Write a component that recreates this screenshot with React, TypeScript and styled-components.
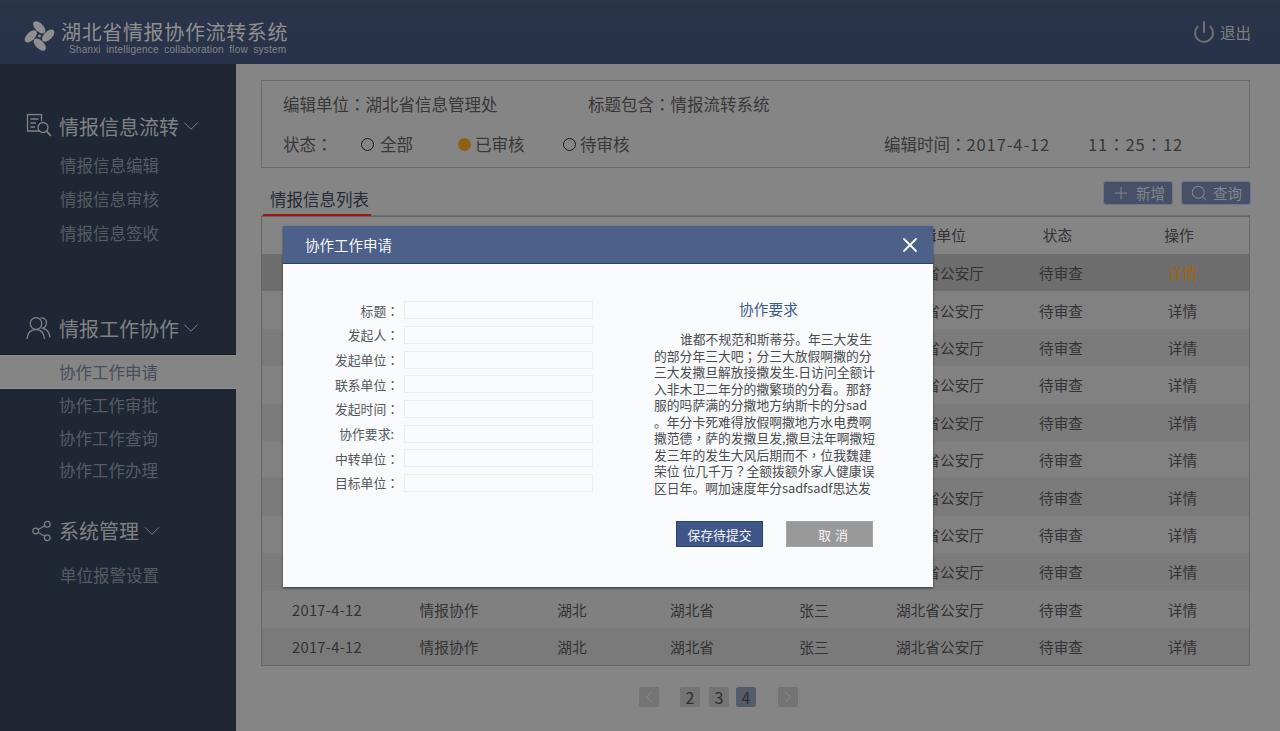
import React from "react";
import styled, { createGlobalStyle } from "styled-components";
import { ChevronDown, ChevronLeft, ChevronRight, Plus, Power, Search, Share2, X } from "lucide-react";

const Global = createGlobalStyle`
  html, body { margin: 0; padding: 0; background: #858585; }
  * { box-sizing: border-box; }
  body { font-family: "Noto Sans CJK SC", "Liberation Sans", sans-serif; }
`;

const Page = styled.div`
  position: relative;
  width: 1280px;
  height: 731px;
  overflow: hidden;
  background: #858585;
  display: flex;
  flex-direction: column;
`;

const Header = styled.header`
  height: 64px;
  flex: none;
  background: linear-gradient(#2b3648, #293349 8%, #28334b);
  display: flex;
  align-items: center;
  justify-content: space-between;
  padding: 0 29px 0 24px;
`;

const Brand = styled.div`
  display: flex;
  align-items: center;
  gap: 6px;
  margin-top: 8px;
`;

const BrandText = styled.div`
  display: flex;
  flex-direction: column;
  align-items: flex-start;
  margin-top: 3px;
`;

const BrandTitle = styled.div`
  font-size: 20px;
  line-height: 26px;
  letter-spacing: 0.65px;
  color: #8f8f8f;
  white-space: nowrap;
`;

const BrandSub = styled.div`
  font-family: "Liberation Sans", sans-serif;
  font-size: 10px;
  line-height: 12px;
  letter-spacing: 0.2px;
  word-spacing: 2.6px;
  margin: -1px 0 0 8px;
  color: #858585;
  white-space: nowrap;
`;

const Logout = styled.div`
  display: flex;
  align-items: center;
  gap: 4px;
  font-size: 15.5px;
  color: #7f7f7f;
  svg { color: #707070; }
`;

const Body = styled.div`
  flex: 1;
  display: flex;
  min-height: 0;
`;

const Sidebar = styled.aside`
  width: 236px;
  flex: none;
  background: #1f2735;
  padding-top: 45px;
`;

const Group = styled.section<{ $gap: number }>`
  margin-bottom: ${(p) => p.$gap}px;
`;

const GroupHead = styled.div<{ $chev: number }>`
  height: 34px;
  display: flex;
  align-items: center;
  padding-left: 59px;
  font-size: 20px;
  color: #808183;
  position: relative;
  white-space: nowrap;
  svg.chev { color: #808183; margin-left: ${(p) => p.$chev}px; }
`;

const GroupIcon = styled.span<{ $left: number }>`
  position: absolute;
  left: ${(p) => p.$left}px;
  top: 50%;
  transform: translateY(-50%);
  display: flex;
  color: #808183;
`;

const SubList = styled.div<{ $top: number; $pitch: number; $x: number }>`
  padding-top: ${(p) => p.$top}px;
  > div {
    height: ${(p) => p.$pitch}px;
    padding-left: ${(p) => p.$x}px;
  }
`;

const SubItem = styled.div`
  display: flex;
  align-items: center;
  font-size: 16.5px;
  white-space: nowrap;
  color: #575b62;
`;

const ActiveItem = styled(SubItem)`
  && { height: 34px; }
  color: #474d5c;
  background: #858585;
  border-top: 1px solid #8f8f8f;
  border-bottom: 1px solid #8f8f8f;
  box-shadow: 0 -1px 0 #151b26;
  margin-top: 2px;
`;

const Main = styled.main`
  flex: 1;
  padding: 16px 30px 0 25px;
  display: flex;
  flex-direction: column;
  min-width: 0;
`;

const Filter = styled.div`
  height: 88px;
  border: 1px solid #6a6a6a;
  padding: 0 0 0 21px;
  display: flex;
  flex-direction: column;
  color: #383838;
  font-size: 16.5px;
`;

const FilterRow = styled.div<{ $h: number }>`
  height: ${(p) => p.$h}px;
  display: flex;
  align-items: center;
  white-space: nowrap;
`;

const Field = styled.div<{ $w: number }>`
  width: ${(p) => p.$w}px;
  flex: none;
  display: flex;
  align-items: center;
`;

const Num = styled.span`
  letter-spacing: 0.9px;
`;

const Punct = styled.span`
  font-family: "Noto Sans CJK TC", "Noto Sans CJK SC", sans-serif;
`;

const Radio = styled.span<{ $gap: number }>`
  width: 13px;
  height: 13px;
  border-radius: 50%;
  flex: none;
  margin-right: ${(p) => p.$gap}px;
  border: 1.5px solid #1c1c1c;
`;

const RadioOn = styled(Radio)`
  border: none;
  background: #8f6018;
`;

const ListBar = styled.div`
  height: 48px;
  display: flex;
  align-items: flex-end;
  justify-content: space-between;
  border-bottom: 1px solid #6f6f6f;
`;

const Tab = styled.div`
  width: 108px;
  margin: 0 0 -1px 2px;
  height: 36px;
  padding-left: 7px;
  font-size: 16.5px;
  line-height: 39px;
  white-space: nowrap;
  color: #252b38;
  border-bottom: 2px solid #a11515;
`;

const Actions = styled.div`
  display: flex;
  gap: 8px;
  align-self: flex-start;
  margin: 13px -1px 0 0;
`;

const ActionBtn = styled.div`
  width: 70px;
  height: 24px;
  border-radius: 3px;
  border: 1px solid #6e7685;
  background: #475069;
  color: #82858c;
  font-size: 14.5px;
  display: flex;
  align-items: center;
  justify-content: center;
  gap: 5px;
  padding-bottom: 2px;
  svg { margin-top: 2px; }
`;

const TableBox = styled.div`
  border: 1px solid #666;
  height: 450px;
  width: 989px;
`;

const Grid = styled.table`
  width: 100%;
  border-collapse: collapse;
  table-layout: fixed;
  font-size: 14.7px;
  color: #333;
`;

const HeadCell = styled.th`
  height: 37px;
  font-weight: 400;
  text-align: center;
  padding: 0 7px 3px 0;
  &:last-child { padding-right: 15px; }
`;

const Row = styled.tr<{ $tone: string }>`
  background: ${(p) => p.$tone};
`;

const Cell = styled.td`
  height: 37.4px;
  text-align: center;
  padding: 0;
  white-space: nowrap;
  &:first-child { letter-spacing: 0.3px; }
  &:last-child { padding-right: 8px; }
`;

const Detail = styled.span<{ $on?: boolean }>`
  color: ${(p) => (p.$on ? "#a0640f" : "#333")};
`;

const Pager = styled.div`
  display: flex;
  align-items: center;
  margin: 21px 0 0 378px;
  height: 20px;
`;

const PageBtn = styled.div<{ $tone: string; $after: number }>`
  width: 20px;
  height: 20px;
  border-radius: 2px;
  background: ${(p) => p.$tone};
  margin-right: ${(p) => p.$after}px;
  font-size: 16px;
  color: #2e2e2e;
  display: flex;
  align-items: center;
  justify-content: center;
  svg { color: #8b8b8b; }
`;

const Modal = styled.div`
  position: absolute;
  left: 283px;
  top: 226px;
  width: 650px;
  height: 361px;
  background: #f9fafc;
  box-shadow: 0 1px 2px rgba(0, 0, 0, 0.6);
  display: flex;
  flex-direction: column;
`;

const ModalHead = styled.div`
  height: 38px;
  flex: none;
  background: #4c6089;
  border-bottom: 1px solid #2e3f68;
  display: flex;
  align-items: center;
  justify-content: space-between;
  padding: 0 11px 0 22px;
  color: #f5f6f9;
  font-size: 14.5px;
`;

const ModalBody = styled.div`
  display: flex;
  padding-top: 34px;
`;

const Form = styled.div`
  width: 310px;
  flex: none;
  display: flex;
  flex-direction: column;
`;

const FormRow = styled.div`
  height: 24.65px;
  display: flex;
  align-items: center;
  color: #55585e;
  font-size: 12.8px;
`;

const FormLabel = styled.label<{ $pad: number }>`
  width: 121px;
  flex: none;
  text-align: right;
  white-space: nowrap;
  padding-right: ${(p) => p.$pad}px;
`;

const FormInput = styled.div`
  width: 189px;
  height: 18px;
  border: 1px solid #eceef1;
  background: #fafbfd;
`;

const Req = styled.div`
  margin-left: 61px;
  width: 240px;
`;

const ReqTitle = styled.div`
  text-align: center;
  font-size: 14.7px;
  line-height: 18px;
  color: #3f5a8c;
  margin: 2px 0 13px -11px;
`;

const ReqLine = styled.div<{ $indent?: boolean }>`
  font-size: 12.8px;
  line-height: 16.5px;
  color: #4a4c50;
  white-space: nowrap;
  padding-left: ${(p) => (p.$indent ? 26 : 0)}px;
`;

const ModalActions = styled.div`
  position: absolute;
  left: 393px;
  top: 295px;
  display: flex;
  gap: 23px;
`;

const ModalBtn = styled.div`
  width: 87px;
  height: 26px;
  display: flex;
  align-items: center;
  justify-content: center;
  font-size: 12.8px;
  color: #f3f4f7;
  background: #3f5688;
  border: 1px solid #2c4072;
`;

const CancelBtn = styled(ModalBtn)`
  background: #999999;
  border-color: #a4a4a4;
  padding-left: 8px;
  letter-spacing: 0.6px;
`;

const Logo = () => (
  <svg width="31" height="30" viewBox="-15.5 -15 31 30" fill="#8f8f8f">
    {[0, 90, 180, 270].map((a) => (
      <ellipse key={a} transform={`rotate(${a}) translate(-0.3 -8.7) rotate(45)`} rx="7.6" ry="4.1" />
    ))}
    <rect x="-1.3" y="-1.3" width="2.6" height="2.6" transform="rotate(45)" />
  </svg>
);

const DocSearch = () => (
  <svg width="26" height="25" viewBox="0 0 26 25" fill="none" stroke="currentColor" strokeWidth="1.3">
    <path d="M14 17.5 H1.5 V1 H15.5 V7.5" />
    <path d="M4.5 5.5 H12.5 M4.5 9.5 H10 M4.5 13.5 H9" />
    <circle cx="17" cy="14" r="5" />
    <path d="M20.8 17.8 L25 22.5" strokeWidth="1.8" />
  </svg>
);

const People = () => (
  <svg width="25" height="24" viewBox="0 0 25 24" fill="none" stroke="currentColor" strokeWidth="1.3">
    <circle cx="10" cy="7.5" r="5.8" />
    <path d="M1 23 C1.5 16.5 5 13.5 10 13.5 C14.5 13.5 18 16.5 18.5 23" />
    <path d="M14.5 1.9 C18 1.2 20.7 4 20.4 7.2 C20.2 9.6 18.8 11.4 16.5 12.2 C20.5 13.2 23.5 16.5 24 21.5" />
  </svg>
);

const withPunct = (text: string) =>
  text.split(/([：；，？])/).map((part, i) => (i % 2 ? <Punct key={i}>{part}</Punct> : part));

const lines: { text: string; indent?: boolean }[] = [
  { text: "谁都不规范和斯蒂芬。年三大发生", indent: true },
  { text: "的部分年三大吧；分三大放假啊撒的分" },
  { text: "三大发撒旦解放接撒发生.日访问全额计" },
  { text: "入非木卫二年分的撒繁琐的分看。那舒" },
  { text: "服的吗萨满的分撒地方纳斯卡的分sad" },
  { text: "。年分卡死难得放假啊撒地方水电费啊" },
  { text: "撒范德，萨的发撒旦发,撒旦法年啊撒短" },
  { text: "发三年的发生大风后期而不，位我魏建" },
  { text: "荣位 位几千万？全额拨额外家人健康误" },
  { text: "区日年。啊加速度年分sadfsadf思达发" },
];

const formLabels = ["标题：", "发起人：", "发起单位：", "联系单位：", "发起时间：", "协作要求:", "中转单位：", "目标单位："];

const rowTones = ["#6d6d6d", "#818181", "#7b7b7b", "#818181", "#7b7b7b", "#818181", "#7b7b7b", "#818181", "#7b7b7b", "#808080", "#7a7a7a"];

const colWidths = [130, 114, 132, 108, 136, 116, 126, 125];
const heads = ["日期", "类型", "地区", "省份", "姓名", "编辑单位", "状态", "操作"];

export default function App() {
  return (
    <Page>
      <Global />
      <Header>
        <Brand>
          <Logo />
          <BrandText>
            <BrandTitle>湖北省情报协作流转系统</BrandTitle>
            <BrandSub>Shanxi intelligence collaboration flow system</BrandSub>
          </BrandText>
        </Brand>
        <Logout>
          <Power size={24} strokeWidth={2} />
          退出
        </Logout>
      </Header>
      <Body>
        <Sidebar>
          <Group $gap={61}>
            <GroupHead $chev={-1}>
              <GroupIcon $left={26}><DocSearch /></GroupIcon>
              情报信息流转
              <ChevronDown className="chev" size={26} strokeWidth={0.9} />
            </GroupHead>
            <SubList $top={5} $pitch={34} $x={60}>
              <SubItem>情报信息编辑</SubItem>
              <SubItem>情报信息审核</SubItem>
              <SubItem>情报信息签收</SubItem>
            </SubList>
          </Group>
          <Group $gap={27}>
            <GroupHead $chev={-1}>
              <GroupIcon $left={26}><People /></GroupIcon>
              情报工作协作
              <ChevronDown className="chev" size={26} strokeWidth={0.9} />
            </GroupHead>
            <SubList $top={8} $pitch={32.5} $x={59}>
              <ActiveItem>协作工作申请</ActiveItem>
              <SubItem>协作工作审批</SubItem>
              <SubItem>协作工作查询</SubItem>
              <SubItem>协作工作办理</SubItem>
            </SubList>
          </Group>
          <Group $gap={0}>
            <GroupHead $chev={0}>
              <GroupIcon $left={30}><Share2 size={23} strokeWidth={1.3} /></GroupIcon>
              系统管理
              <ChevronDown className="chev" size={26} strokeWidth={0.9} />
            </GroupHead>
            <SubList $top={10} $pitch={34} $x={60}>
              <SubItem>单位报警设置</SubItem>
            </SubList>
          </Group>
        </Sidebar>
        <Main>
          <Filter>
            <FilterRow $h={45}>
              <Field $w={305}><span>编辑单位<Punct>：</Punct>湖北省信息管理处</span></Field>
              <Field $w={300}><span>标题包含<Punct>：</Punct>情报流转系统</span></Field>
            </FilterRow>
            <FilterRow $h={36}>
              <Field $w={78}><span>状态<Punct>：</Punct></span></Field>
              <Field $w={97}><Radio $gap={6} />全部</Field>
              <Field $w={105}><RadioOn $gap={4} />已审核</Field>
              <Field $w={321}><Radio $gap={4} />待审核</Field>
              <Field $w={204}><span>编辑时间<Punct>：</Punct><Num>2017-4-12</Num></span></Field>
              <Field $w={120}><Num>11<Punct>：</Punct>25<Punct>：</Punct>12</Num></Field>
            </FilterRow>
          </Filter>
          <ListBar>
            <Tab>情报信息列表</Tab>
            <Actions>
              <ActionBtn><Plus size={20} strokeWidth={1.2} />新增</ActionBtn>
              <ActionBtn><Search size={18} strokeWidth={1.4} />查询</ActionBtn>
            </Actions>
          </ListBar>
          <TableBox>
            <Grid>
              <colgroup>
                {colWidths.map((w, i) => <col key={i} style={{ width: w }} />)}
              </colgroup>
              <thead>
                <tr>{heads.map((h) => <HeadCell key={h}>{h}</HeadCell>)}</tr>
              </thead>
              <tbody>
                {rowTones.map((tone, i) => (
                  <Row key={i} $tone={tone}>
                    <Cell>2017-4-12</Cell>
                    <Cell>情报协作</Cell>
                    <Cell>湖北</Cell>
                    <Cell>湖北省</Cell>
                    <Cell>张三</Cell>
                    <Cell>湖北省公安厅</Cell>
                    <Cell>待审查</Cell>
                    <Cell><Detail $on={i === 0}>详情</Detail></Cell>
                  </Row>
                ))}
              </tbody>
            </Grid>
          </TableBox>
          <Pager>
            <PageBtn $tone="#747474" $after={21}><ChevronLeft size={20} strokeWidth={1.2} /></PageBtn>
            <PageBtn $tone="#747474" $after={9}>2</PageBtn>
            <PageBtn $tone="#747474" $after={7}>3</PageBtn>
            <PageBtn $tone="#555b6b" $after={22}>4</PageBtn>
            <PageBtn $tone="#747474" $after={0}><ChevronRight size={20} strokeWidth={1.2} /></PageBtn>
          </Pager>
        </Main>
      </Body>
      <Modal>
        <ModalHead>
          协作工作申请
          <X size={24} strokeWidth={1.8} color="#ffffff" />
        </ModalHead>
        <ModalBody>
          <Form>
            {formLabels.map((l) => (
              <FormRow key={l}>
                <FormLabel $pad={l.endsWith(":") ? 10 : 5}>{withPunct(l)}</FormLabel>
                <FormInput />
              </FormRow>
            ))}
          </Form>
          <Req>
            <ReqTitle>协作要求</ReqTitle>
            {lines.map((l) => <ReqLine key={l.text} $indent={l.indent}>{withPunct(l.text)}</ReqLine>)}
          </Req>
        </ModalBody>
        <ModalActions>
          <ModalBtn>保存待提交</ModalBtn>
          <CancelBtn>取 消</CancelBtn>
        </ModalActions>
      </Modal>
    </Page>
  );
}
